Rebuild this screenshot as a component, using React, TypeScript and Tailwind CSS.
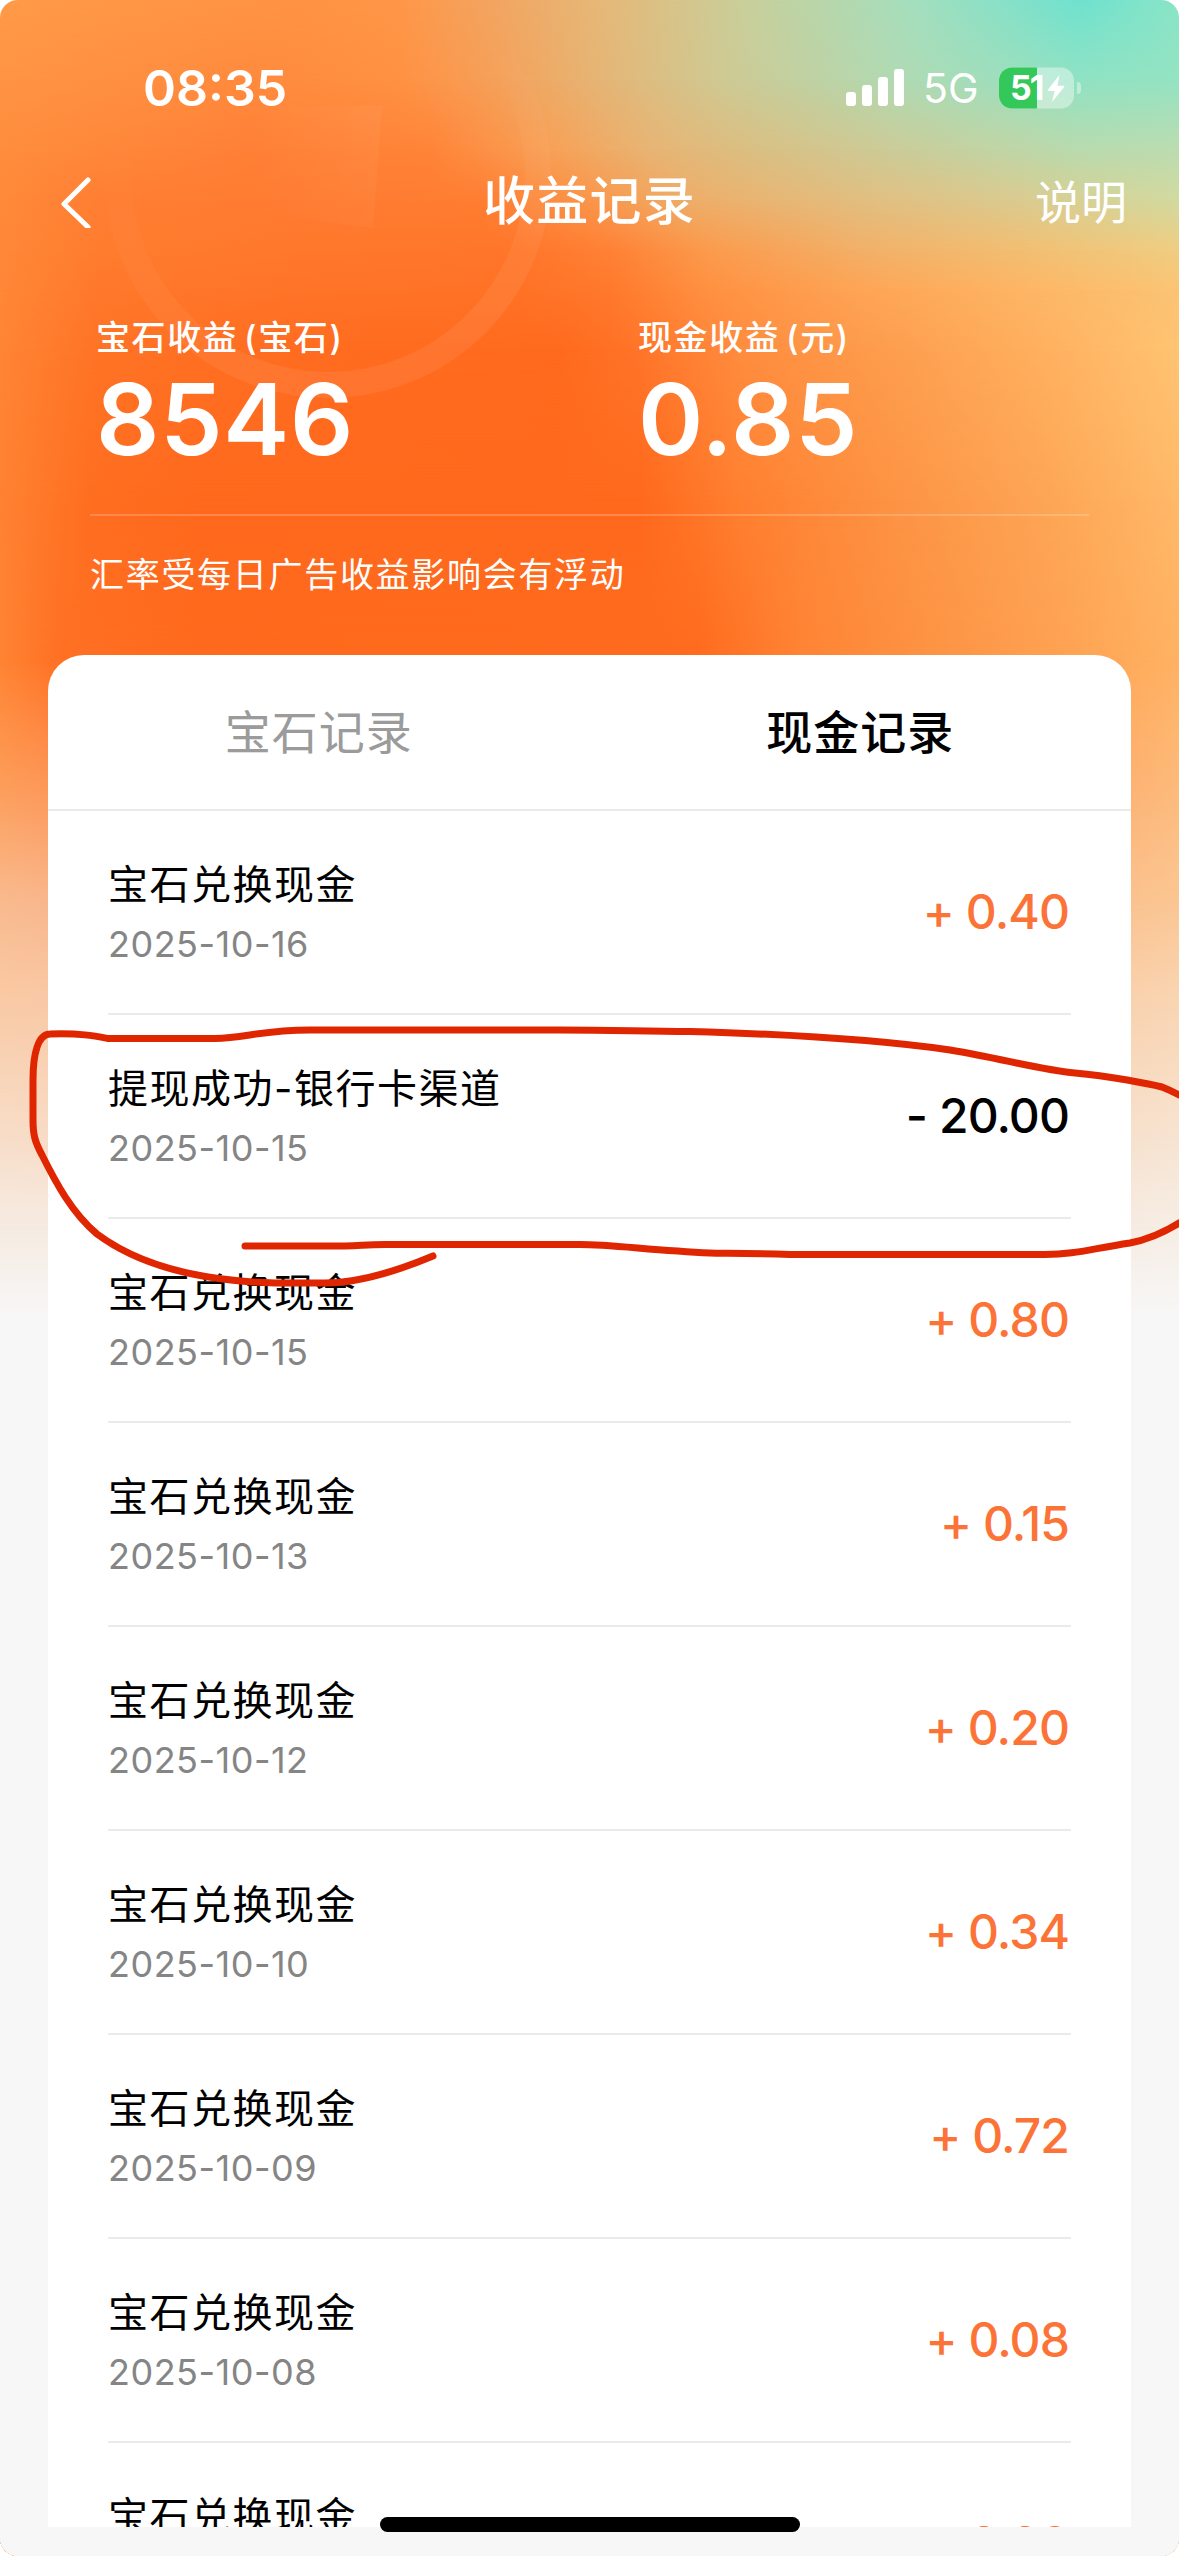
import React from 'react';

interface RecordItem {
  title: string;
  date: string;
  amount: string;
  out?: boolean;
}

const records: RecordItem[] = [
  { title: '宝石兑换现金', date: '2025-10-16', amount: '+ 0.40' },
  { title: '提现成功-银行卡渠道', date: '2025-10-15', amount: '- 20.00', out: true },
  { title: '宝石兑换现金', date: '2025-10-15', amount: '+ 0.80' },
  { title: '宝石兑换现金', date: '2025-10-13', amount: '+ 0.15' },
  { title: '宝石兑换现金', date: '2025-10-12', amount: '+ 0.20' },
  { title: '宝石兑换现金', date: '2025-10-10', amount: '+ 0.34' },
  { title: '宝石兑换现金', date: '2025-10-09', amount: '+ 0.72' },
  { title: '宝石兑换现金', date: '2025-10-08', amount: '+ 0.08' },
  { title: '宝石兑换现金', date: '2025-10-07', amount: '+ 0.08' },
];

// Horizontal colour bands, each one fades in over the band above it
const bands = [
  { y: 0, stops: '#ff9a48 0, #ff9344 300px, #ff9748 400px, #f4a35e 480px, #e6b878 600px, #c8d09c 750px, #a2dfbf 920px, #6fe2cf 1080px, #8ae5c6 1179px' },
  { y: 80, stops: '#ff9444 0, #ff8a3d 250px, #ff9143 400px, #f5a15a 500px, #e5b575 600px, #cfc993 720px, #b0dab3 900px, #90e2c4 1080px, #94e3c2 1179px' },
  { y: 150, stops: '#ff8d3d 0, #ff8036 250px, #ff8438 430px, #f8a056 550px, #e8b474 650px, #d9c084 760px, #cbcc99 900px, #b9dbae 1080px, #bcdcb0 1179px' },
  { y: 200, stops: '#ff8a39 0, #ff7e33 100px, #ff7b31 300px, #ff7d31 480px, #fa964a 590px, #eeae69 690px, #e2bd7f 850px, #dacb90 1020px, #d2da9f 1179px' },
  { y: 250, stops: '#ff8838 0, #ff7c2f 100px, #ff782c 300px, #ff762a 520px, #ff8136 610px, #fb9b4d 710px, #f2b068 860px, #f2be72 1020px, #efcd82 1179px' },
  { y: 290, stops: '#ff8737 0, #ff782b 100px, #ff7428 300px, #ff7226 520px, #ff792c 610px, #ff9142 710px, #fea455 860px, #fdb564 1020px, #fbc474 1179px' },
  { y: 350, stops: '#ff8534 0, #ff7325 100px, #ff6c20 300px, #ff6a1e 560px, #ff7529 640px, #ff8c3e 740px, #fd9f4f 900px, #ffb160 1050px, #ffc472 1179px' },
  { y: 500, stops: '#ff8232 0, #ff6e20 90px, #ff691d 200px, #ff691d 640px, #ff8030 740px, #fd9445 900px, #fda655 1050px, #ffb968 1179px' },
  { y: 660, stops: '#ff8433 0, #ff7024 60px, #ff691d 200px, #ff6b1e 700px, #ff8334 800px, #fd9546 950px, #fea152 1060px, #ffb262 1179px' },
  { y: 780, stops: '#fd9c58 0, #fd9656 48px, #fdb272 1131px, #fdba7a 1179px' },
  { y: 900, stops: '#f9ba8d 0, #f9b68c 48px, #fbc28f 1131px, #fbc693 1179px' },
  { y: 1000, stops: '#f9caa5 0, #f9c9a6 48px, #f9d2ae 1131px, #f9d5b3 1179px' },
  { y: 1130, stops: '#f8dcc6 0, #f8dbc5 48px, #f7e0cc 1131px, #f7e3d0 1179px' },
  { y: 1220, stops: '#f6eae0 0, #f6eae0 48px, #f6ebe1 1131px, #f6ede4 1179px' },
  { y: 1320, stops: '#f7f7f7 0, #f7f7f7 1179px' },
];

const Backdrop: React.FC = () => (
  <div className="absolute inset-0">
    {bands.map((band, idx) => {
      const from = idx > 0 ? bands[idx - 1].y : 0;
      return (
        <div
          key={band.y}
          className="absolute inset-0"
          style={{
            backgroundImage: `linear-gradient(to right, ${band.stops})`,
            maskImage: idx > 0 ? `linear-gradient(to bottom, transparent ${from}px, black ${band.y}px)` : undefined,
          }}
        ></div>
      );
    })}

    {/* Faint coin */}
    <svg className="absolute left-0 top-0" width="700" height="460" viewBox="0 0 700 460" fill="none">
      <defs>
        <linearGradient id="coin" x1="0" y1="0" x2="0.3" y2="1">
          <stop offset="0.4" stopColor="#fff" stopOpacity="0" />
          <stop offset="1" stopColor="#fff" stopOpacity="0.07" />
        </linearGradient>
        <linearGradient id="notch" x1="0" y1="0" x2="1" y2="0">
          <stop offset="0" stopColor="#fff" stopOpacity="0" />
          <stop offset="1" stopColor="#fff" stopOpacity="0.04" />
        </linearGradient>
      </defs>
      <circle cx="328" cy="175" r="210" stroke="url(#coin)" strokeWidth="26" />
      <path d="M250 106H382L373 228L250 212Z" fill="url(#notch)" />
    </svg>
  </div>
);

const StatusBar: React.FC = () => (
  <div className="flex h-[140px] items-center justify-between pl-[143px] pr-[98px] pt-9">
    <span className="text-[50px] font-semibold leading-none">08:35</span>
    <div className="flex items-center">
      <svg width="58" height="38" viewBox="0 0 58 38" fill="white">
        <rect x="0" y="23" width="10" height="14" rx="3" />
        <rect x="16" y="16" width="10" height="21" rx="3" />
        <rect x="32" y="8" width="10" height="29" rx="3" />
        <rect x="48" y="0" width="10" height="37" rx="3" />
      </svg>
      <span className="ml-[19px] w-[76px] text-[41px] leading-none">5G</span>
      <div className="relative flex h-[47px] w-[75px] items-center overflow-hidden rounded-[14px] bg-white/40 [clip-path:inset(3px_0_round_13px)]">
        <div className="absolute inset-y-0 left-0 w-[38px] bg-[#34c759]"></div>
        <span className="relative ml-[11px] w-[37px] text-[34px] font-bold leading-none tracking-[-2px]">51</span>
        <svg className="relative" width="18" height="29" viewBox="0 0 18 28" fill="white">
          <path d="M12.5 0.5L0.8 15.2Q0.2 16.4 1.4 16.4H7.6L5 27.4L17.2 12.4Q17.8 11.2 16.6 11.2H10.4Z" />
        </svg>
      </div>
      <div className="ml-[3px] h-3 w-1 rounded-r-full bg-white/40"></div>
    </div>
  </div>
);

const NavBar: React.FC = () => (
  <div className="grid h-[124px] grid-cols-[1fr_auto_1fr] items-center pl-[61px] pr-[52px]">
    <svg width="30" height="52" viewBox="0 0 30 52" fill="none">
      <path d="M27 4L3 28L27 51" stroke="white" strokeWidth="5" strokeLinecap="round" strokeLinejoin="round" />
    </svg>
    <h1 className="mr-[9px] text-[52px] font-medium leading-none tracking-[1.3px]">收益记录</h1>
    <span className="text-right text-[46px] leading-none">说明</span>
  </div>
);

const Stat: React.FC<{ label: string; value: string }> = ({ label, value }) => (
  <div className="w-[542px] shrink-0">
    <div className="text-[34px] font-medium leading-10 tracking-[1.6px] [word-spacing:-5px]">{label}</div>
    <div className="text-[99px] font-semibold leading-[122px] tracking-[0.8px]">{value}</div>
  </div>
);

const RecordRow: React.FC<{ item: RecordItem }> = ({ item }) => (
  <div className="mx-[60px] flex h-[204px] shrink-0 items-center justify-between border-b-2 border-[#ebebeb] [font-feature-settings:'calt'_0]">
    <div className="flex flex-col gap-[7px] pt-[5px]">
      <div className="text-[40px] leading-[52px] tracking-[1.5px] text-black">{item.title}</div>
      <div className="text-[36px] leading-[52px] tracking-[0.5px] text-[#858585]">{item.date}</div>
    </div>
    <div className={item.out ? 'pr-[2px] text-[48px] font-medium leading-none tracking-[-0.9px] text-black' : 'pr-[2px] text-[48px] font-medium leading-none tracking-[-0.9px] text-[#fc7338]'}>
      {item.amount}
    </div>
  </div>
);

const App: React.FC = () => {
  return (
    <div className="bg-white">
      <div className="relative h-[2556px] w-[1179px] overflow-hidden rounded-[18px] bg-[#f7f7f7] font-['Inter','Noto_Sans_CJK_SC',sans-serif] text-white">
        <Backdrop />

        <div className="relative flex h-[2527px] flex-col">
          <StatusBar />
          <NavBar />

          {/* Totals */}
          <section className="mx-[90px] flex h-[391px] flex-col">
            <div className="flex h-[252px] border-b-2 border-white/20 pl-[6px] pt-[54px]">
              <Stat label="宝石收益 (宝石)" value="8546" />
              <Stat label="现金收益 (元)" value="0.85" />
            </div>
            <p className="pt-[39px] text-[34px] leading-10 tracking-[1.7px]">汇率受每日广告收益影响会有浮动</p>
          </section>

          {/* Record list */}
          <section className="mx-12 flex min-h-0 flex-1 flex-col overflow-hidden rounded-t-[36px] bg-white">
            <div className="flex h-[156px] shrink-0 items-center border-b-2 border-[#ebebeb] text-center text-[46px] tracking-[1px]">
              <div className="flex-1 text-[#9b9b9b]">宝石记录</div>
              <div className="flex-1 font-medium text-black">现金记录</div>
            </div>
            {records.map((item, idx) => (
              <RecordRow key={idx} item={item} />
            ))}
          </section>
        </div>

        {/* Hand-drawn marker around the withdrawal row */}
        <svg className="absolute left-0 top-0" width="1179" height="1400" viewBox="0 0 1179 1400" fill="none">
          <path
            d="M433 1256C390 1274 355 1283 325 1283H275C200 1281 140 1266 97 1234C72 1213 56 1183 42 1155C35 1142 33 1135 33 1120V1080C33 1054 38 1034 50 1034C80 1033 95 1036 108 1038.500H215C245 1038 262 1030 310 1030H560C620 1030 640 1031.500 690 1031.500C780 1034 880 1040 950 1050C1000 1058 1040 1070 1075 1073C1110 1076 1150 1084 1162 1087C1172 1091 1180 1095 1190 1101M1190 1216C1170 1230 1152 1239 1130 1243C1090 1249 1075 1254.500 1045 1254.500H790C740 1253 720 1253.500 710 1253C650 1250 610 1244.500 580 1244.500H385C365 1244.500 360 1246 345 1246H245"
            stroke="#e02600"
            strokeWidth="7"
            strokeLinecap="round"
            strokeLinejoin="round"
          />
        </svg>

        {/* Home indicator */}
        <div className="absolute bottom-6 left-[380px] h-[15px] w-[420px] rounded-full bg-black"></div>
      </div>
    </div>
  );
};

export default App;
